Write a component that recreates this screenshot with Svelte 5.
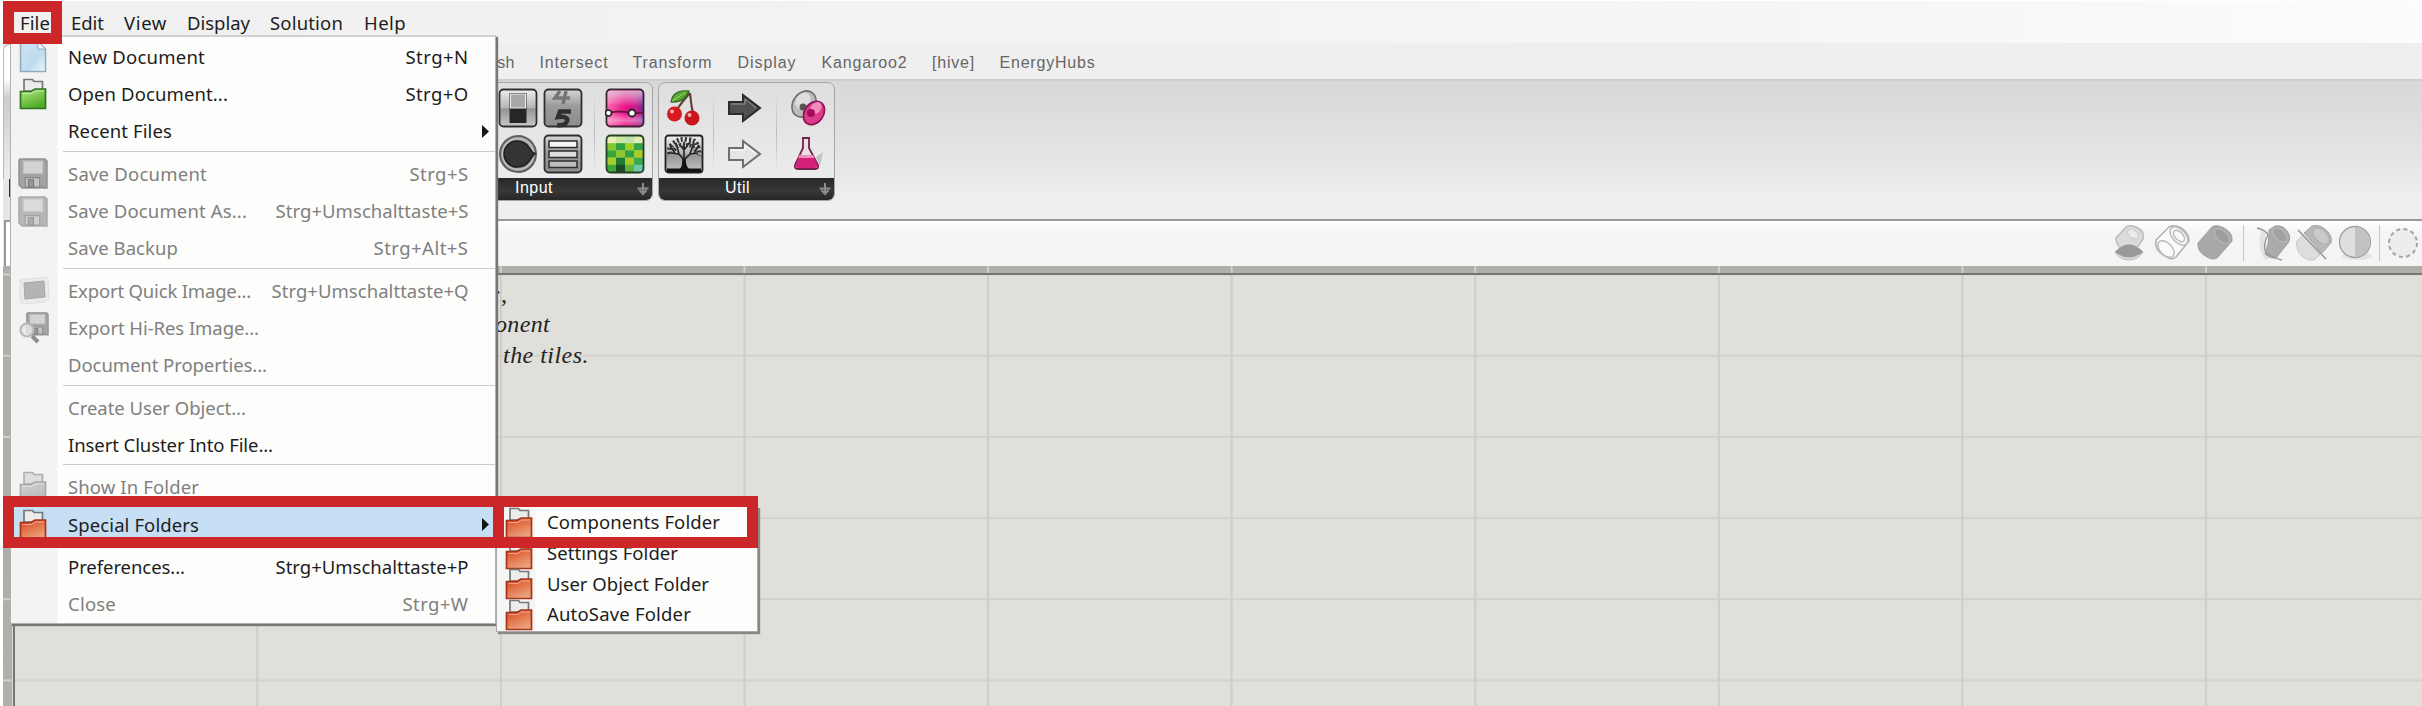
<script>
  const menus = [
    { t: 'File', w: 28, g: 23 }, { t: 'Edit', w: 31, g: 22 }, { t: 'View', w: 41, g: 22 },
    { t: 'Display', w: 61, g: 22 }, { t: 'Solution', w: 71, g: 23 }, { t: 'Help', w: 40, g: 0 },
  ];
  const tabs = [
    { t: 'Mesh', w: 38, g: 27 }, { t: 'Intersect', w: 67, g: 26 }, { t: 'Transform', w: 78, g: 27 },
    { t: 'Display', w: 57, g: 27 }, { t: 'Kangaroo2', w: 84, g: 26.5 }, { t: '[hive]', w: 41, g: 26.5 },
    { t: 'EnergyHubs', w: 94, g: 0 },
  ];
  const items = [
    { t: 'New Document', w: 135, k: 'Strg+N', kw: 61, icon: 'doc' },
    { t: 'Open Document...', w: 158, k: 'Strg+O', kw: 61, icon: 'green' },
    { t: 'Recent Files', w: 102, sub: true },
    { sep: true },
    { t: 'Save Document', w: 137, k: 'Strg+S', kw: 57, icon: 'disk', off: true },
    { t: 'Save Document As...', w: 177, k: 'Strg+Umschalttaste+S', kw: 191, icon: 'disk2', off: true },
    { t: 'Save Backup', w: 108, k: 'Strg+Alt+S', kw: 93, off: true },
    { sep: true },
    { t: 'Export Quick Image...', w: 181, k: 'Strg+Umschalttaste+Q', kw: 195, icon: 'pic', off: true },
    { t: 'Export Hi-Res Image...', w: 189, icon: 'hires', off: true },
    { t: 'Document Properties...', w: 197, off: true },
    { sep: true },
    { t: 'Create User Object...', w: 176, off: true },
    { t: 'Insert Cluster Into File...', w: 203 },
    { sep: true },
    { t: 'Show In Folder', w: 129, icon: 'gray', off: true },
    { t: 'Special Folders', w: 129, icon: 'red', sub: true, hot: true },
    { sep: true },
    { t: 'Preferences...', w: 115, k: 'Strg+Umschalttaste+P', kw: 191 },
    { t: 'Close', w: 46, k: 'Strg+W', kw: 64, off: true },
  ];
  const folders = [
    { t: 'Components Folder', w: 171 }, { t: 'Settings Folder', w: 129 },
    { t: 'User Object Folder', w: 160 }, { t: 'AutoSave Folder', w: 142 },
  ];
  const palettes = {
    green: ['#b4ea88', '#4faa24', '#2f7420'],
    red: ['#dc4318', '#e9a27c', '#a8341a'],
    gray: ['#d2d2d2', '#b9b9b9', '#a9a9a9'],
  };
  const tiles = ['#e9efb4', '#cfe6a2', '#bfe2b0', '#e0edb0', '#86c72d', '#2f9f3f', '#9fce27', '#36a246', '#38a53c', '#8fc82c', '#2ea144', '#a8cc27', '#a6cf2c', '#1e7a32', '#a9c926', '#38a94c', '#3aa836', '#1d4a26', '#5cb43a', '#6ccba6'];

  // Spreads the letters so that a label fills its column width.
  function fit(node, width) {
    const natural = node.getBoundingClientRect().width;
    node.style.letterSpacing = `${(width + 2 - natural) / node.textContent.length}px`;
  }
</script>

{#snippet folder(kind)}
  <svg class="ic" width="28" height="32" viewBox="0 0 28 32">
    <defs>
      <linearGradient id={'f' + kind} x1="0" y1="0" x2=".5" y2="1">
        <stop offset="0" stop-color={palettes[kind][0]} /><stop offset="1" stop-color={palettes[kind][1]} />
      </linearGradient>
    </defs>
    <path d="M5 13V1.500h8.500l1.500 2h8.500v9.500z" fill={kind === 'gray' ? '#dedede' : '#ececec'} stroke={kind === 'gray' ? '#b0b0b0' : '#777'} stroke-width="1.700" />
    <path d="M1.500 30.500V13.500h10.500l4-2.500h10.500v19.500z" fill={`url(#f${kind})`} stroke={palettes[kind][2]} stroke-width="1.700" />
    <path d="M3.500 15.500h9l4-2.500h8.500" fill="none" stroke="#fff" stroke-opacity=".45" />
  </svg>
{/snippet}

{#snippet disk()}
  <path d="M2 1h24l2 2v26h-4l-1-2-1 2H4l-3-3V2z" fill="#a4a4a4" stroke="#929292" stroke-width="1.500" />
  <path d="M5 3h19v12H5z" fill="#d3d3d3" stroke="#bcbcbc" />
  <path d="M7 19h14v9H7z" fill="#c3c3c3" stroke="#858585" />
  <path d="M10 21h5v7h-5z" fill="#989898" stroke="#777" />
{/snippet}

{#snippet menuIcon(kind)}
  {#if palettes[kind]}
    {@render folder(kind)}
  {:else if kind === 'doc'}
    <svg class="ic" width="28" height="32" viewBox="0 0 28 32">
      <defs><linearGradient id="dg" x1="0" y1="0" x2="1" y2="1"><stop offset="0" stop-color="#d3e3ef" /><stop offset=".6" stop-color="#bddbee" /><stop offset="1" stop-color="#eff7fb" /></linearGradient></defs>
      <path d="M1.500 1h18l7 7v22.500h-25z" fill="url(#dg)" stroke="#91a9c1" stroke-width="1.500" /><path d="M19 1v7h7" fill="#f4f8fb" stroke="#91a9c1" />
    </svg>
  {:else if kind === 'pic'}
    <svg class="ic wide" width="32" height="30" viewBox="0 0 32 30">
      <path d="M2 4l26-3 2 2 1 20-3 3-23 2-3-2z" fill="#eaeaea" stroke="#e0e0e0" /><path d="M6 7l20-2 1 16-20 2z" fill="#b4b4b4" stroke="#a6a6a6" />
    </svg>
  {:else if kind === 'hires'}
    <svg class="ic wide" width="32" height="34" viewBox="0 0 32 34">
      <g transform="translate(8 1) scale(.79)">{@render disk()}</g>
      <circle cx="9" cy="19" r="6.500" fill="#e5e5e5" fill-opacity=".85" stroke="#b8b8b8" stroke-width="2.200" /><path d="M14 25l6 6" stroke="#8f8f8f" stroke-width="4" />
    </svg>
  {:else if kind}
    <svg class="ic wide" class:pale={kind === 'disk2'} width="30" height="31" viewBox="0 0 29 30">{@render disk()}</svg>
  {/if}
{/snippet}

<div class="app">
  <nav class="menubar">
    {#each menus as m}<span class="mi" style={`width:${m.w + m.g}px`}><span use:fit={m.w}>{m.t}</span></span>{/each}
  </nav>
  <div class="tabs">
    {#each tabs as m}<span class="mi" style={`width:${m.w + m.g}px`}><span use:fit={m.w}>{m.t}</span></span>{/each}
  </div>

  <div class="ribbon">
    <section class="group input">
      <div class="tools">
        <div class="pair">
          <svg width="40" height="40" viewBox="0 0 40 40">
            <defs>
              <linearGradient id="steel" x1="0" y1="0" x2="0" y2="1"><stop offset="0" stop-color="#efefef" /><stop offset=".5" stop-color="#b5b5b5" /><stop offset=".52" stop-color="#949494" /><stop offset="1" stop-color="#c8c8c8" /></linearGradient>
              <linearGradient id="dusk" x1="0" y1="0" x2="0" y2="1"><stop offset="0" stop-color="#d8d8d8" /><stop offset=".45" stop-color="#9a9a9a" /><stop offset="1" stop-color="#8c8c8c" /></linearGradient>
            </defs>
            <rect x="1.500" y="1.500" width="37" height="37" rx="4" fill="url(#steel)" stroke="#303030" stroke-width="1.800" />
            <rect x="11.500" y="5" width="17" height="30" fill="#262626" /><rect x="12.500" y="6" width="15" height="14" fill="#a9a9a9" stroke="#eee" />
          </svg>
          <svg width="40" height="40" viewBox="0 0 40 40">
            <circle cx="20" cy="20" r="18" fill="#9c9c9c" stroke="#606060" stroke-width="2" /><circle cx="20" cy="20" r="15.500" fill="none" stroke="#c2c2c2" stroke-width="1.500" />
            <path d="M37 19.500c-5-1-6-12.500-18-12.500a13 13 0 0 0 0 26c12 0 13-9 18-13.500z" fill="#343434" stroke="#1e1e1e" stroke-width="1.500" />
          </svg>
        </div>
        <div class="pair">
          <svg width="40" height="40" viewBox="0 0 40 40">
            <rect x="1.500" y="1.500" width="37" height="37" rx="4" fill="url(#dusk)" stroke="#303030" stroke-width="1.800" />
            <path d="M17 3l-5 7h15M23 3l-3 13" fill="none" stroke="#757575" stroke-width="3.500" />
            <path d="M28 23.500h-11l-2 5.500c9-1 11 2 8 6q-3 3-9 2" fill="none" stroke="#303030" stroke-width="4.500" />
          </svg>
          <svg width="40" height="40" viewBox="0 0 40 40">
            <rect x="1.500" y="1.500" width="37" height="37" rx="4" fill="url(#dusk)" stroke="#303030" stroke-width="1.800" />
            {#each [7, 17, 27] as y, i}<rect x="6" y={y} width="28" height="6.500" fill={['#f5f5f5', '#dedede', '#bdbdbd'][i]} stroke="#2d2d2d" stroke-width="1.500" />{/each}
          </svg>
        </div>
        <i class="rule"></i>
        <div class="pair">
          <svg width="40" height="40" viewBox="0 0 40 40">
            <defs>
              <linearGradient id="pink" x1="0" y1="0" x2="1" y2="0"><stop offset="0" stop-color="#f56db2" /><stop offset=".5" stop-color="#ec1387" /><stop offset=".8" stop-color="#c81c8c" /><stop offset="1" stop-color="#6d2a96" /></linearGradient>
              <linearGradient id="gloss" x1="0" y1="0" x2="0" y2="1"><stop offset="0" stop-color="#ddd" stop-opacity=".75" /><stop offset=".45" stop-color="#fff" stop-opacity="0" /><stop offset=".65" stop-color="#fff" stop-opacity="0" /><stop offset=".85" stop-color="#fff" stop-opacity=".4" /><stop offset="1" stop-color="#fff" stop-opacity=".1" /></linearGradient>
            </defs>
            <rect x="1.500" y="1.500" width="37" height="37" rx="4" fill="url(#pink)" stroke="#3e2035" stroke-width="1.800" /><rect x="2.500" y="2.500" width="35" height="35" rx="3" fill="url(#gloss)" />
            <path d="M4 25q10-3 22 0h12" fill="none" stroke="#731344" stroke-width="1.800" />
            <circle cx="3.500" cy="25" r="3" fill="#fff" stroke="#222" stroke-width="1.500" /><circle cx="27" cy="25" r="3.500" fill="#fff" stroke="#222" stroke-width="1.800" />
          </svg>
          <svg width="40" height="40" viewBox="0 0 40 40">
            {#each tiles as c, i}<rect x={2 + (i % 4) * 9} y={2 + Math.floor(i / 4) * 7.2} width="9.200" height="7.400" fill={c} />{/each}
            <rect x="1.500" y="1.500" width="37" height="37" rx="4" fill="none" stroke="#263f24" stroke-width="1.800" />
          </svg>
        </div>
      </div>
      <footer><span use:fit={36}>Input</span>
        <svg width="14" height="14" viewBox="0 0 14 14"><path d="M7 1v11M1.500 6.500h11M3.500 8L7 12l3.500-4" fill="none" stroke="#8c8c8c" stroke-width="2" /></svg>
      </footer>
    </section>

    <section class="group util">
      <div class="tools">
        <div class="pair">
          <svg width="40" height="40" viewBox="0 0 40 40">
            <path d="M26 5q-9 10-14 18M26 5q1 11 3 21" fill="none" stroke="#66403b" stroke-width="2.200" />
            <path d="M7 14q2-13 18-11-4 12-18 11z" fill="#58a630" stroke="#286a1d" stroke-width="1.200" /><path d="M8 13l14-9" stroke="#a4d66b" />
            <circle cx="10.500" cy="26" r="7.500" fill="#d71920" /><circle cx="28" cy="30" r="7.500" fill="#cb151c" />
            <circle cx="8" cy="23.500" r="2" fill="#f3b1a6" /><circle cx="25.500" cy="27" r="2" fill="#f3b1a6" />
          </svg>
          <svg width="40" height="40" viewBox="0 0 40 40">
            <rect x="1.500" y="1.500" width="37" height="37" rx="3" fill="url(#steel)" stroke="#202020" stroke-width="1.800" />
            <path d="M3 34.500h34V38H3z" fill="#111" />
            <path d="M16 35q3-4 2-11h4q-1 7 3 11z" fill="#111" />
            <path d="M20 26l-5-6-8-1M20 26l6-6 8-1M20 25V8M15 20l-3-11M26 20l4-12M20 16l-5-6M20 16l6-8M11 19l-5-7M30 19l5-8" fill="none" stroke="#222" stroke-width="1.600" />
            <path d="M6 20q-2-7 4-11 6-5 13-3 9-1 10 6 3 4 1 9" fill="none" stroke="#333" stroke-width="5" stroke-dasharray="2 2" />
            <path d="M10 16q5-7 10-4 7-3 11 4" fill="none" stroke="#333" stroke-width="4" stroke-dasharray="2 1.500" />
          </svg>
        </div>
        <i class="rule"></i>
        <div class="pair mid">
          <svg width="40" height="40" viewBox="0 0 40 40"><path d="M3 14h14V7l17 13-17 13v-7H3z" fill="#505050" stroke="#2b2b2b" stroke-width="2" /><path d="M5 16h14v-5l11 9" fill="none" stroke="#999" /></svg>
          <svg width="40" height="40" viewBox="0 0 40 40"><path d="M3 14h14V7l17 13-17 13v-7H3z" fill="#e5e5e5" stroke="#6f6f6f" stroke-width="2" /><path d="M5 16h14v-5l11 9" fill="none" stroke="#fff" /></svg>
        </div>
        <i class="rule"></i>
        <div class="pair">
          <svg width="40" height="40" viewBox="0 0 40 40">
            <ellipse cx="16" cy="16" rx="11" ry="14" transform="rotate(35 16 16)" fill="#bcbcbc" stroke="#6a6a6a" stroke-width="1.500" /><ellipse cx="15" cy="13" rx="7" ry="9" transform="rotate(35 15 13)" fill="#dedede" /><circle cx="15" cy="19" r="3.500" fill="#555" />
            <ellipse cx="26" cy="25" rx="9.500" ry="12.500" transform="rotate(35 26 25)" fill="#dd3c8c" stroke="#8f1650" stroke-width="1.800" /><ellipse cx="28" cy="20" rx="5" ry="6.500" transform="rotate(40 28 20)" fill="#f08dbd" /><circle cx="23" cy="25" r="4" fill="#a40c59" />
          </svg>
          <svg width="40" height="40" viewBox="0 0 40 40">
            <path d="M28 23l7-5-3 14z" fill="#c5c2c5" />
            <path d="M14 4h8M15 4v10L7 31q-1 4 3 4h17q4 0 3-4l-9-17V4" fill="#eedce8" stroke="#70234a" stroke-width="1.800" />
            <path d="M11.500 21h13.500l4.500 10q1 3-3 3H10q-3 0-2-3z" fill="#d61f78" /><path d="M11.500 21H25l1.500 3H10z" fill="#ef8fbd" />
          </svg>
        </div>
      </div>
      <footer><span use:fit={23}>Util</span>
        <svg width="14" height="14" viewBox="0 0 14 14"><path d="M7 1v11M1.500 6.500h11M3.500 8L7 12l3.500-4" fill="none" stroke="#8c8c8c" stroke-width="2" /></svg>
      </footer>
    </section>
  </div>

  <div class="viewbar">
    <svg width="36" height="40" viewBox="0 0 36 40"><path d="M5 15L15 4q5-3 12 1 7 4 5 11l-6 9H10q-5-3-5-10z" fill="#dadada" stroke="#bcbcbc" stroke-width="1.500" /><ellipse cx="22" cy="11" rx="6" ry="4" transform="rotate(35 22 11)" fill="#eaeaea" stroke="#ccc" /><path d="M4 29q14-15 28 0-5 8-14 8T4 29z" fill="#dadada" stroke="#bdbdbd" /><path d="M4 29q14-15 28 0-14 11-28 0z" fill="#999" /></svg>
    <svg width="36" height="40" viewBox="0 0 36 40"><path d="M2 17L15 4q5-3 12 1 8 5 8 13L22 34q-4 4-11-1Q0 27 2 17z" fill="#fafafa" stroke="#b0b0b0" stroke-width="1.500" /><g fill="none" stroke="#bbb" stroke-width="1.500"><ellipse cx="25" cy="13" rx="11" ry="6.500" transform="rotate(46 25 13)" /><ellipse cx="25" cy="13" rx="7" ry="4" transform="rotate(46 25 13)" /><ellipse cx="12" cy="26" rx="10" ry="6" transform="rotate(46 12 26)" /></g></svg>
    <svg width="36" height="40" viewBox="0 0 36 40"><path d="M1 20L15 4q4-3 12 1 9 5 8 13L21 34q-4 4-11 0Q0 29 1 20z" fill="#a9a9a9" stroke="#9c9c9c" /><ellipse cx="25" cy="13" rx="9" ry="5" transform="rotate(44 25 13)" fill="#9e9e9e" stroke="#b8b8b8" /></svg>
    <i></i>
    <svg width="38" height="40" viewBox="0 0 38 40"><path d="M8 8q-4 18 4 28l-2-8z" fill="#d4d4d4" stroke="#e2e2e2" stroke-width="4" /><path d="M14 7l6-4q8-1 12 5 5 7 1 12L21 35q-6 1-11-4 5-12 4-24z" fill="#ababab" stroke="#9c9c9c" /><ellipse cx="25" cy="12" rx="9" ry="5" transform="rotate(46 25 12)" fill="#a2a2a2" stroke="#bdbdbd" /><path d="M2 5q9 2 11 7-7 14 0 19 8 5 14 6" fill="none" stroke="#959595" stroke-width="1.300" /></svg>
    <svg width="38" height="40" viewBox="0 0 38 40"><path d="M3 18l6-6 17 20-6 5q-5 1-11-3-8-7-6-16z" fill="#ddd" stroke="#c5c5c5" /><path d="M10 10l8-7q8-2 14 4 7 6 5 13l-9 10z" fill="#b8b8b8" stroke="#a5a5a5" /><ellipse cx="27" cy="13" rx="10" ry="6" transform="rotate(46 27 13)" fill="#c9c9c9" stroke="#aaa" /><path d="M4 7l28 29" stroke="#959595" stroke-width="1.500" /></svg>
    <svg width="36" height="40" viewBox="0 0 36 40"><ellipse cx="20" cy="33" rx="15" ry="4" fill="#e4e4e4" /><circle cx="18" cy="19" r="15.500" fill="#dedede" stroke="#a0a0a0" stroke-width="1.300" /><path d="M18 4a15 15 0 0 1 0 30z" fill="#c2c2c2" /></svg>
    <i></i>
    <svg width="34" height="40" viewBox="0 0 34 40"><circle cx="17" cy="20" r="14" fill="#ededed" stroke="#a3a3a3" stroke-width="2" stroke-dasharray="4 3.330" /></svg>
  </div>

  <main class="canvas">
    <p>;,</p>
    <p><span use:fit={53}>onent</span></p>
    <p class="last"><span use:fit={84}>the tiles.</span></p>
  </main>

  <div class="edge"><b></b><u></u><s></s></div>

  <div class="menu">
    {#each items as it}
      {#if it.sep}
        <hr />
      {:else}
        <div class="row" class:off={it.off} class:hot={it.hot}>
          <span class="slot">{@render menuIcon(it.icon)}</span>
          <span class="label"><span use:fit={it.w}>{it.t}</span></span>
          {#if it.k}<span class="key"><span use:fit={it.kw}>{it.k}</span></span>{/if}
          {#if it.sub}<svg class="arrow" width="7" height="13" viewBox="0 0 7 13"><path d="M0 0l7 6.500L0 13z" fill="#151515" /></svg>{/if}
        </div>
      {/if}
    {/each}
  </div>

  <div class="submenu">
    {#each folders as f}
      <div class="srow"><span class="slot">{@render folder('red')}</span><span class="label"><span use:fit={f.w}>{f.t}</span></span></div>
    {/each}
  </div>

  <div class="mark file"></div>
  <div class="mark special"></div>
  <div class="mark comps"></div>
</div>

<style>
  :global(body) { background: #fff; overflow: hidden; }
  .app { position: relative; width: 2422px; height: 706px; box-sizing: border-box; padding: 1px 0 0 3px; overflow: hidden; display: flex; flex-direction: column; font-family: "Noto Sans", sans-serif; color: #1d1d1d; }
  .menubar, .tabs { display: flex; box-sizing: border-box; white-space: nowrap; flex: none; }
  .mi { flex: none; }
  .menubar { height: 42px; padding-left: 17px; font-size: 18.500px; line-height: 43px; background: linear-gradient(90deg, #f0f0f0, #f3f3f3 45%, #f7f6f6 75%, #fcfcfc); }
  .tabs { height: 36px; padding-left: 471.500px; font: 16px/39px "Liberation Sans", sans-serif; color: #666; background: #efefef; }
  .ribbon { flex: none; height: 140px; box-sizing: border-box; border-top: 2px solid #cfcfcf; background: linear-gradient(#d8d8d8, #e2e2e2 45%, #eee 85%, #efefef); padding: 1px 0 0 305px; display: flex; gap: 5px; }
  .group { height: 119px; box-sizing: border-box; border: 1.500px solid #a5a5a5; border-radius: 7px; overflow: hidden; display: flex; flex-direction: column; background: linear-gradient(#dedede, #efefef); }
  .input { width: 345px; }
  .util { width: 177px; }
  .tools { flex: 1; display: flex; padding-top: 5px; align-items: flex-start; }
  .input .tools { justify-content: flex-end; padding-right: 7px; gap: 5px; }
  .util .tools { padding-left: 5px; }
  .pair { display: flex; flex-direction: column; gap: 6px; }
  .pair svg { display: block; }
  .rule { width: 1px; height: 80px; margin-top: 5px; background: linear-gradient(transparent, #bbb, transparent); }
  .input .rule { margin-left: 6px; margin-right: 5px; }
  .util .rule { margin-left: 9px; }
  .util .mid { margin-left: 12px; }
  .util .mid + .rule { margin-left: 10px; margin-right: 11px; }
  footer { height: 22px; background: linear-gradient(#292929, #373737 60%, #262626); color: #fff; display: flex; align-items: center; font: 16px/20px "Liberation Sans", sans-serif; }
  footer span { margin-top: -2px; }
  .input footer { padding-left: 206px; }
  .util footer { padding-left: 66px; }
  footer svg { margin-left: auto; margin-right: 2px; }
  .viewbar { flex: none; height: 47px; box-sizing: border-box; border-top: 2px solid #999; background: linear-gradient(#fff, #f5f5f5 25%, #f4f4f4); display: flex; align-items: center; padding: 0 0 2px 2108px; }
  .viewbar svg { flex: none; }
  .viewbar svg:nth-of-type(2) { margin-left: 7px; }
  .viewbar svg:nth-of-type(3) { margin-left: 7px; }
  .viewbar svg:nth-of-type(5) { margin-left: 1px; }
  .viewbar svg:nth-of-type(6) { margin-left: 5px; }
  .viewbar i { flex: none; width: 1px; height: 36px; background: #c6c6c6; margin: 0 11px 0 10px; }
  .viewbar i:last-of-type { margin: 0 6px; }
  .canvas { flex: 1; box-sizing: border-box; padding: 13px 0 0 492px;
    background:
      linear-gradient(#757572, #757572) 11px 7px / 100% 2px no-repeat,
      linear-gradient(#757572, #757572) 10px 7px / 2px 100% no-repeat,
      linear-gradient(90deg, #cecdc9 1.500px, transparent 1.500px) 253.300px 0 / 243.600px 100%,
      linear-gradient(#d2d1cd 1.500px, transparent 1.500px) 0 7.500px / 100% 81.200px,
      linear-gradient(#aeaea9, #b0b0ab) 0 0 / 100% 7px no-repeat,
      linear-gradient(#aeaea9, #b0b0ab) 0 0 / 9px 100% no-repeat,
      #e0dfda; }
  .canvas p { margin: 0; font: italic 24px/30.300px "Liberation Serif", serif; color: #222; white-space: pre; }
  .canvas p:first-child { margin-left: -2px; }
  .canvas .last { margin-left: 8px; }
  .edge { position: absolute; left: 3px; top: 44px; width: 9px; height: 222px; background: #e6e6e6; display: flex; flex-direction: column; align-items: flex-end; }
  .edge b { width: 8px; height: 134px; border-left: 1px solid #bbb; border-top: 1px solid #bbb; border-radius: 7px 0 0; background: linear-gradient(#fff 25%, #ccc 40%, #eee); }
  .edge u { width: 3px; height: 18px; background: #2c2c2c; }
  .edge s { width: 8px; height: 46px; margin-top: auto; box-sizing: border-box; border: solid #999; border-width: 2px 0 0 2px; background: #fff; }
  .menu { position: absolute; left: 10px; top: 35px; width: 486px; height: 588.500px; box-sizing: border-box; padding-top: .500px; border: 1px solid #b2b2b2; border-top-width: 2px; border-top-color: #d1d1d1; background: linear-gradient(90deg, #f3f3f2 0 46px, #fdfdfb 47px); box-shadow: 2px 2px 1px #777; font-size: 18.500px; }
  .menu hr { height: 1px; border: 0; margin: 1px 0 2.800px 52px; background: #c9cccc; }
  .row { position: relative; height: 37.400px; display: flex; align-items: center; padding-right: 26.500px; white-space: nowrap; }
  .slot { width: 57px; flex: none; display: flex; align-items: center; box-sizing: border-box; padding-left: 8px; }
  .row .slot .ic { margin-left: 0; }
  .row .slot .wide { margin-left: -1px; }
  .ic { display: block; margin-top: 1px; }
  .pale { opacity: .75; }
  .key { margin-left: auto; }
  .off { color: #808080; }
  .hot { background: #c7dff5; }
  .arrow { position: absolute; right: 6px; top: 13px; }
  .submenu { position: absolute; left: 496px; top: 506px; width: 262px; height: 126px; box-sizing: border-box; border: 1px solid #aaa; background: linear-gradient(90deg, #f5f5f4 0 38px, #fdfdfb 39px); box-shadow: 2px 2px 1px #888; font-size: 18.500px; }
  .srow { height: 30.700px; display: flex; align-items: center; white-space: nowrap; }
  .srow .slot { width: 50px; }
  .srow .label { margin-top: -1px; }
  .mark { position: absolute; box-sizing: border-box; border: 11px solid #cd2628; }
  .file { left: 3px; top: 1px; width: 59px; height: 43px; }
  .special { left: 3px; top: 496px; width: 501px; height: 52px; }
  .comps { left: 493px; top: 496px; width: 265px; height: 52px; }
</style>
